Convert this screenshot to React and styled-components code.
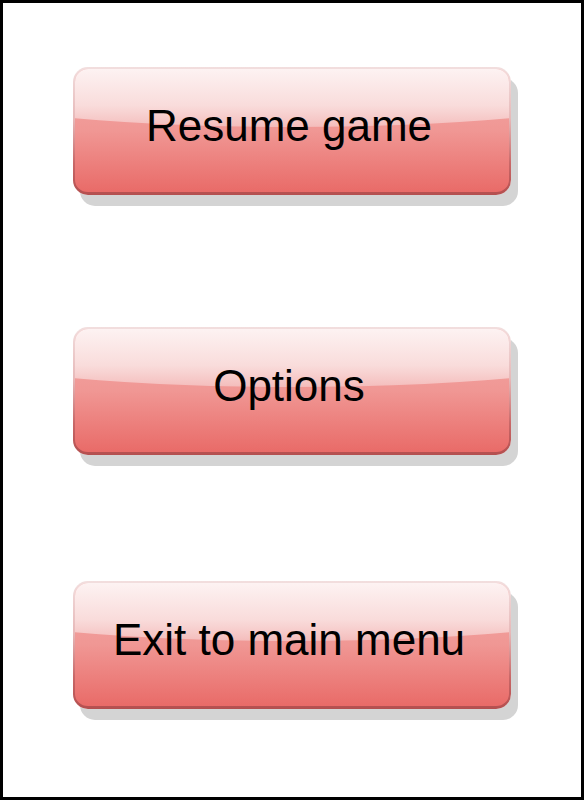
import React from 'react';
import styled, { createGlobalStyle } from 'styled-components';

const GlobalStyle = createGlobalStyle`
  body {
    margin: 0;
    background: #fff;
    font-family: "Liberation Sans", Arial, sans-serif;
  }
`;

const Frame = styled.div`
  box-sizing: border-box;
  width: 584px;
  height: 800px;
  border: 3px solid #000;
  display: flex;
  flex-direction: column;
  align-items: center;
`;

const MenuButton = styled.button`
  position: relative;
  box-sizing: border-box;
  width: 438px;
  height: 128px;
  margin-top: ${(p) => p.$top}px;
  border: 2px solid transparent;
  border-bottom-width: 3px;
  border-radius: 15px;
  background:
    linear-gradient(to bottom, #f3aaa8 0%, #f09794 50%, #e96b68 100%) padding-box,
    linear-gradient(to bottom, #f2dede 0%, #e7b9b9 40%, #c96868 75%, #b44f4f 100%) border-box;
  box-shadow: 7px 11px 0 #d4d4d4;
  font-family: "Liberation Sans", Arial, sans-serif;
  font-size: 44px;
  color: #000;
  cursor: pointer;
  overflow: hidden;
  padding: 0 6px 0 0;

  /* glossy top half */
  &::before {
    content: '';
    position: absolute;
    left: -30%;
    right: -30%;
    top: -40px;
    height: 98px;
    border-radius: 0 0 50% 50% / 0 0 40px 40px;
    background: linear-gradient(to bottom, #fff 0%, #fdf2f2 41%, #f9dcdb 78%, #f6c9c8 92%, #f4bcbb 100%);
  }

  span {
    position: relative;
    display: block;
    margin-top: -10px;
  }
`;

const items = [
  { label: 'Resume game', top: 64 },
  { label: 'Options', top: 132 },
  { label: 'Exit to main menu', top: 126 },
];

const App = () => (
  <>
    <GlobalStyle />
    <Frame>
      {items.map((it) => (
        <MenuButton key={it.label} $top={it.top}>
          <span>{it.label}</span>
        </MenuButton>
      ))}
    </Frame>
  </>
);

export default App;
